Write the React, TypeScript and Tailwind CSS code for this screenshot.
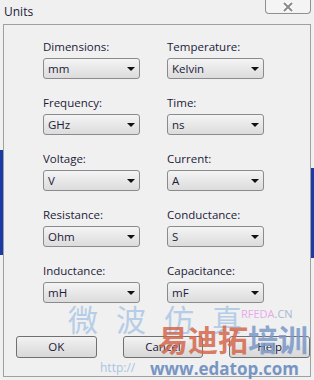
import { Fragment } from "react";

const fields: [string, string, string, string][] = [
  ["Dimensions:", "mm", "Temperature:", "Kelvin"],
  ["Frequency:", "GHz", "Time:", "ns"],
  ["Voltage:", "V", "Current:", "A"],
  ["Resistance:", "Ohm", "Conductance:", "S"],
  ["Inductance:", "mH", "Capacitance:", "mF"],
];

function Combo({ label, value }: { label: string; value: string }) {
  return (
    <div className="flex flex-col gap-[4px]">
      <span className="h-[16px] pt-[1px] leading-[16px] text-[#1b1b3a]">{label}</span>
      <div className="flex h-[21px] items-center justify-between rounded-[3px] border border-[#8a8b8d] bg-gradient-to-b from-[#f4f4f4] to-[#dcdcdc] pl-[4px] pr-[4px]">
        <span className="leading-none text-[#1b1b3a]">{value}</span>
        <svg width="8" height="4" viewBox="0 0 8 4">
          <path d="M0 0h8L4 4z" fill="#111" />
        </svg>
      </div>
    </div>
  );
}

function DialogButton({ text }: { text: string }) {
  return (
    <button className="h-[22px] w-[86px] rounded-[3px] border border-[#707070] bg-gradient-to-b from-[#f2f2f2] to-[#d8d8d8] text-[#1b1b3a] leading-none">
      {text}
    </button>
  );
}

export default function App() {
  return (
    <div
      className="relative h-[380px] w-[314px] overflow-hidden bg-[#f0f0f0] text-[11.5px]"
      style={{ fontFamily: '"Open Sans", "Noto Sans CJK SC", sans-serif' }}
    >
      <div className="flex h-[24px] items-start justify-between pl-[4px]">
        <span className="mt-[4px] text-[12px] leading-[16px] text-[#1b1b3a]">Units</span>
        <div className="mr-[3px] flex h-[14px] w-[46px] items-center justify-center rounded-b-[4px] border border-t-0 border-[#8f8f8f] bg-[#f4f4f4]">
          <svg width="12" height="10" viewBox="0 0 12 10">
            <path d="M2 1l8 8M10 1l-8 8" stroke="#fff" strokeWidth="4" />
            <path d="M2 1l8 8M10 1l-8 8" stroke="#8a8a8a" strokeWidth="2" />
          </svg>
        </div>
      </div>

      <div className="mx-[3px] h-[353px] border border-[#a0a0a0] pt-[13px]">
        <div className="grid grid-cols-[97px_97px] gap-x-[27px] gap-y-[15px] pl-[39px]">
          {fields.map(([l1, v1, l2, v2]) => (
            <Fragment key={l1}>
              <Combo label={l1} value={v1} />
              <Combo label={l2} value={v2} />
            </Fragment>
          ))}
        </div>
        <div className="mt-[33px] flex gap-[26px] pl-[12px]">
          <DialogButton text="OK" />
          <DialogButton text="Cancel" />
          <DialogButton text="Help" />
        </div>
      </div>

      {/* edges of the window behind */}
      <div className="absolute left-0 top-[150px] h-[105px] w-[3px] bg-[#1a3aa8]" />
      <div className="absolute right-0 top-[168px] h-[90px] w-[3px] bg-[#1a3aa8]" />

      {/* watermark */}
      <div className="pointer-events-none absolute left-[68px] top-[305px] text-[30px] leading-none tracking-[18px] text-[#8fb6e0] opacity-60">
        微波仿真
      </div>
      <div className="pointer-events-none absolute left-[241px] top-[308px] text-[11px] leading-none">
        <span className="text-[#e8a8e8]">RFEDA</span>
        <span className="text-[#a8b8d0]">.CN</span>
      </div>
      <div className="pointer-events-none absolute left-[158px] top-[325px] flex text-[30px] font-bold leading-none opacity-85">
        <span className="text-[#d4684e]">易迪拓</span>
        <span className="text-[#7a98c8]">培训</span>
      </div>
      <div className="pointer-events-none absolute left-[150px] top-[360px] text-[17px] font-bold leading-none text-[#6b8cbf] opacity-90">
        www.edatop.com
      </div>
      <div className="pointer-events-none absolute left-[100px] top-[362px] text-[12px] leading-none text-[#a8c4e4]">
        http://
      </div>
    </div>
  );
}
